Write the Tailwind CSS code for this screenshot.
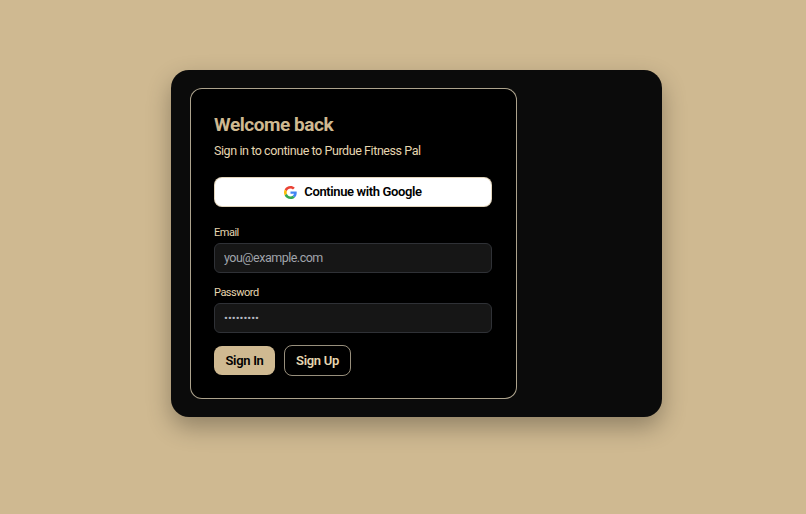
<!DOCTYPE html>
<html lang="en">
<head>
  <meta charset="UTF-8" />
  <meta name="viewport" content="width=device-width, initial-scale=1.0"/>
  <title>Sign in</title>
  <script src="https://cdn.jsdelivr.net/npm/@tailwindcss/browser@4"></script>
</head>
<body class="bg-[#cfb991] font-[Roboto,sans-serif] h-screen overflow-hidden pl-[171px] pt-[70px]">
  <div class="w-[491px] h-[347px] bg-[#0b0b0b] rounded-[18px] pl-[19px] pr-[18px] pt-[18px] shadow-[0_10px_25px_rgba(0,0,0,0.3)]">
    <div class="w-[327px] h-[311px] bg-black border border-[#d8ccb0]/80 rounded-[12px] pl-[23px] pr-[24px] pt-[24px]">
      <h1 class="text-[19px] leading-[24px] tracking-[-0.45px] font-bold text-[#cfb991]">Welcome back</h1>
      <p class="mt-[4px] text-[12.5px] leading-[20px] tracking-[-0.42px] text-[#e6d6b0]">Sign in to continue to Purdue Fitness Pal</p>

      <button class="mt-[16px] w-full h-[30px] bg-white border border-[#cfb991]/60 rounded-[8px] flex items-center justify-center gap-[7px] text-[13px] tracking-[-0.37px] font-semibold text-black">
        <svg class="w-[13px] h-[13px]" viewBox="0 0 48 48">
          <path fill="#EA4335" d="M24 9.5c3.5 0 6.6 1.2 9.1 3.6l6.8-6.8C35.8 2.5 30.3 0 24 0 14.6 0 6.5 5.4 2.6 13.2l7.9 6.1C12.4 13.7 17.7 9.5 24 9.5z"/>
          <path fill="#4285F4" d="M46.98 24.55c0-1.57-.15-3.09-.38-4.55H24v9.02h12.94c-.58 2.96-2.26 5.48-4.78 7.18l7.73 6c4.51-4.18 7.09-10.36 7.09-17.65z"/>
          <path fill="#FBBC05" d="M10.53 28.59c-.48-1.45-.76-2.99-.76-4.59s.27-3.14.76-4.59l-7.98-6.19C.92 16.46 0 20.12 0 24c0 3.88.92 7.54 2.56 10.78l7.97-6.19z"/>
          <path fill="#34A853" d="M24 48c6.48 0 11.93-2.13 15.89-5.81l-7.73-6c-2.15 1.45-4.92 2.3-8.16 2.3-6.26 0-11.57-4.22-13.47-9.91l-7.98 6.19C6.51 42.62 14.62 48 24 48z"/>
        </svg>
        Continue with Google
      </button>

      <label class="block mt-[19px] text-[11px] leading-[14px] tracking-[-0.5px] text-[#e6d6b0]">Email</label>
      <input type="email" placeholder="you@example.com" class="mt-[3px] block w-full h-[30px] px-[9px] pb-[1px] bg-[#161616] border border-[#2f3136] rounded-[6px] text-[12.5px] tracking-[-0.5px] placeholder:text-[#a0a4ab]" />

      <label class="block mt-[13px] text-[11px] leading-[14px] tracking-[-0.5px] text-[#e6d6b0]">Password</label>
      <input type="password" value="password1" class="mt-[3px] block w-full h-[30px] px-[9px] bg-[#161616] border border-[#2f3136] rounded-[6px] text-[11.5px] text-[#b4b8c0]" />

      <div class="mt-[12px] flex items-center gap-[9px]">
        <button class="w-[61px] h-[29px] bg-[#cfb991] rounded-[8px] text-[13px] tracking-[-0.3px] font-semibold text-black">Sign In</button>
        <button class="w-[67px] h-[31px] border border-[#d8ccb0]/70 rounded-[8px] text-[13px] tracking-[-0.3px] font-semibold text-[#e6d6b0]">Sign Up</button>
      </div>
    </div>
  </div>
</body>
</html>
